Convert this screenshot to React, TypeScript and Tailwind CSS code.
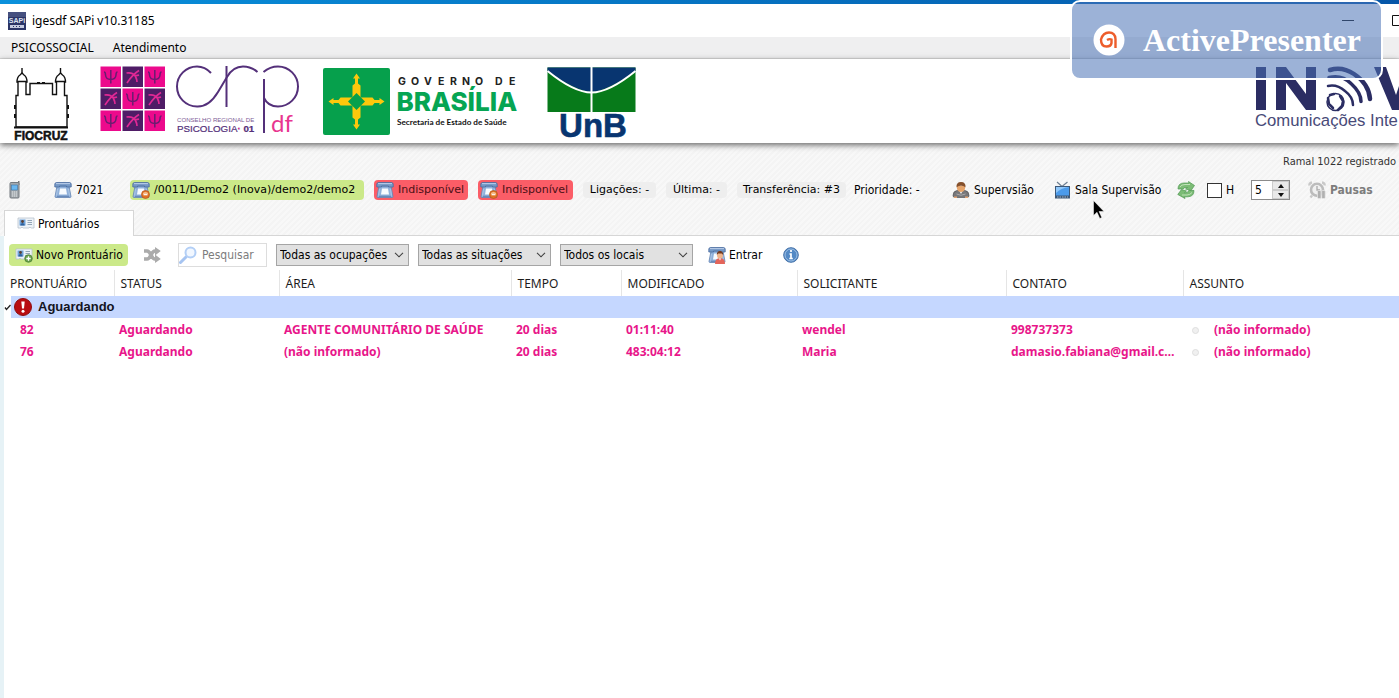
import React from "react";

const ui = "font-['Noto_Sans','Open_Sans',sans-serif]";
const tahoma = "font-['DejaVu_Sans_Condensed','DejaVu_Sans',sans-serif]";
const verdana = "font-['DejaVu_Sans',sans-serif]";

function AppIcon() {
  return (
    <svg width="18" height="18" viewBox="0 0 18 18" aria-hidden="true">
      <rect width="18" height="18" fill="#2c3566" />
      <rect y="0" width="18" height="5" fill="#46507f" />
      <text x="9" y="11" textAnchor="middle" fontSize="7" fontWeight="bold" fill="#dfe3f2" fontFamily="Liberation Sans">SAPi</text>
      <rect x="2" y="13" width="14" height="3" fill="#c6cbe0" />
      <path d="M5 14.5h1m2 0h1m2 0h1" stroke="#2c3566" />
    </svg>
  );
}

function Telephone({ badge }: { badge?: "busy" | "user" }) {
  return (
    <svg width="18" height="18" viewBox="0 0 18 18" className="shrink-0" aria-hidden="true">
      <path d="M3 5h12L17 15.500q0 1-1 1H2q-1 0-1-1z" fill="#8fb0da" stroke="#6384b2" strokeWidth=".8" />
      <path d="M.8 3Q.8 1.500 3 1.500h12q2.200 0 2.200 1.500v3h-4.700V5h-7v1H.8z" fill="#7598c6" stroke="#4a6c9f" strokeWidth=".8" />
      <path d="M2 2.600h14" stroke="#b9cde8" />
      <path d="M6 7.500h6l1 6H5z" fill="#f8fbff" />
      <path d="M3.500 8l-1 6.500M14.500 8l1 6.500" stroke="#b5cbe8" strokeWidth=".8" />
      <path d="M3 15.300h12" stroke="#5f83b5" />
      {badge === "busy" && (
        <>
          <circle cx="13.500" cy="13.500" r="4" fill="#e07424" stroke="#b9541b" strokeWidth=".7" />
          <path d="M11 12q2.500-2 5 0v1h-5z" fill="#f6bd8c" />
          <path d="M11.500 13.700h4" stroke="#fff" strokeWidth="1.200" />
        </>
      )}
      {badge === "user" && (
        <>
          <path d="M7 18q0-6 5-6t5 6z" fill="#e4655a" />
          <circle cx="12" cy="9.500" r="3" fill="#f0b58c" />
          <path d="M8.800 9q0-4 3.200-4t3.200 4l-1.500-1.500h-3.500z" fill="#74391d" />
          <path d="M11 12.500l1 2 1-2z" fill="#fff" />
        </>
      )}
    </svg>
  );
}

function Mobile() {
  return (
    <svg width="12" height="18" viewBox="0 0 12 18" aria-hidden="true">
      <path d="M9 0h1.500v4H9z" fill="#777" />
      <rect x="1" y="1.500" width="9" height="15.500" rx="1" fill="#a3a9ae" stroke="#73797f" />
      <rect x="2.500" y="4" width="6" height="5" fill="#69b6ef" stroke="#3f75a5" strokeWidth=".6" />
      <path d="M3 11h5M3 13h5M3 15h5" stroke="#e4e8ea" strokeDasharray="1.200 .7" />
    </svg>
  );
}

function Card({ add }: { add?: boolean }) {
  return (
    <svg width="18" height="16" viewBox="0 0 18 16" aria-hidden="true">
      <path d="M1 2h16v10h-3l-1-1-1 1H6l-1-1-1 1H1z" fill="#eef3f8" stroke="#b7c2cd" strokeWidth=".8" />
      <rect x="2.500" y="3.500" width="6" height="6" fill="#6ea3da" />
      <circle cx="5.500" cy="5.500" r="1.400" fill="#5b3e33" />
      <path d="M3.300 9.500q0-2.500 2.200-2.500t2.200 2.500z" fill="#2f609c" />
      <path d="M10.500 4.500H15M10.500 6.500H15M10.500 8.500H15" stroke="#94a6b8" />
      {add && (
        <>
          <circle cx="13.500" cy="11.500" r="3.800" fill="#69a24d" stroke="#477a31" strokeWidth=".7" />
          <path d="M13.500 9.300v4.400M11.300 11.500h4.400" stroke="#fff" strokeWidth="1.300" />
        </>
      )}
    </svg>
  );
}

function Person() {
  return (
    <svg width="18" height="18" viewBox="0 0 18 18" aria-hidden="true">
      <path d="M1 14.500q0-4.500 4-5h8q4 .5 4 5 0 2-2 2H3q-2 0-2-2z" fill="#77777a" stroke="#47474a" strokeWidth=".6" />
      <path d="M4.500 13q4.500 2.500 9 0" stroke="#a9a9ab" fill="none" />
      <path d="M7 9.500h4L9 13z" fill="#f5f5f5" />
      <path d="M5 5h8v3q-1 3-4 3T5 8z" fill="#e6a56c" />
      <path d="M4.500 6.500Q4 1 9 1t4.500 5.500Q12 4.500 9 4.800 6 4.500 4.500 6.500z" fill="#85502c" />
      <path d="M2 16.300h3m8 0h3" stroke="#e0a173" strokeWidth="1.500" />
    </svg>
  );
}

function Television() {
  return (
    <svg width="17" height="18" viewBox="0 0 17 18" aria-hidden="true">
      <path d="M3 1l5 4.500L13.500 1" fill="none" stroke="#6d7e91" strokeWidth="1.200" />
      <rect x="1" y="5" width="15" height="12.500" fill="#3d5877" />
      <path d="M2 6h13v8.500H2z" fill="#4c9bea" />
      <path d="M2 6h13q-8 1-13 6z" fill="#8fc7fa" />
      <path d="M3 16h11" stroke="#a8b6c5" strokeDasharray="1.500 1" />
    </svg>
  );
}

function Refresh() {
  return (
    <svg width="18" height="18" viewBox="0 0 18 18" aria-hidden="true">
      <path d="M1 8Q1 2 7 2h5l-.5-1.500L17.500 4.500 14 9.500 8.500 8l2-1.500H9q-2 0-3 1.500z" fill="#7cbc76" stroke="#4e9850" strokeWidth=".7" />
      <path d="M17 9.500q0 6-6 6.300H7.500L8 17.500.8 13.500 4.500 8.500l5 1.500-2 1.700H9q2.200 0 2.700-2.200z" fill="#7cbc76" stroke="#4e9850" strokeWidth=".7" />
      <path d="M3 6q1.500-2.500 5-2.500h5M15 11.500Q13 14 10 14H5" stroke="#bfe2b8" fill="none" />
    </svg>
  );
}

function AlarmPause() {
  return (
    <svg width="18" height="18" viewBox="0 0 18 18" aria-hidden="true">
      <path d="M1.500 4.500Q1 2 4 1.500M16.500 4.500Q17 2 14 1.500M4 14.500l-1.500 2" stroke="#c9c9c9" strokeWidth="2.400" fill="none" />
      <circle cx="9" cy="8.800" r="6" fill="#f0f0f0" stroke="#bcbcbc" strokeWidth="2.600" />
      <path d="M9 5v4h3" stroke="#aaa" strokeWidth="1.300" fill="none" />
      <rect x="9.500" y="9.500" width="3.500" height="8" rx="1" fill="#b0b0b0" stroke="#e9e9e9" strokeWidth=".7" />
      <rect x="13.700" y="9.500" width="3.500" height="8" rx="1" fill="#b0b0b0" stroke="#e9e9e9" strokeWidth=".7" />
    </svg>
  );
}

function ShuffleIcon() {
  return (
    <svg width="18" height="16" viewBox="0 0 18 16" aria-hidden="true">
      <path d="M1 4h3q2 0 4 4t4 4h2M1 12h3q2 0 4-4t4-4h2" fill="none" stroke="#ababab" strokeWidth="3.600" />
      <path d="M12 0l5.800 4L12 8.500zM12 7.500l5.800 4.500-5.800 4z" fill="#ababab" />
    </svg>
  );
}

function Magnifier() {
  return (
    <svg width="18" height="18" viewBox="0 0 18 18" aria-hidden="true">
      <path d="M1.500 16.500L7 11" stroke="#a6c4f1" strokeWidth="3" strokeLinecap="round" />
      <circle cx="11.500" cy="6.500" r="5" fill="#f1f7ff" stroke="#b3cff6" strokeWidth="2" />
    </svg>
  );
}

function InfoIcon() {
  return (
    <svg width="16" height="16" viewBox="0 0 16 16" aria-hidden="true">
      <circle cx="8" cy="8" r="7.300" fill="#5389c5" stroke="#4370a8" />
      <circle cx="8" cy="8" r="6" fill="none" stroke="#9dbfe3" />
      <path d="M8 3v2M6.500 7H8v4.500M6.300 11.500h3.500" fill="none" stroke="#fff" strokeWidth="1.700" />
    </svg>
  );
}

function AlertIcon() {
  return (
    <svg width="18" height="18" viewBox="0 0 18 18" aria-hidden="true">
      <circle cx="9" cy="9" r="8.500" fill="#b90d12" stroke="#8e0e10" />
      <path d="M7.300 3.500h3.400L10 10.500H8z" fill="#fff" />
      <circle cx="9" cy="13.300" r="1.500" fill="#fff" />
    </svg>
  );
}

function FiocruzLogo() {
  return (
    <svg width="60" height="84" viewBox="11 59 60 84" role="img" aria-label="Fiocruz">
      <g fill="none" stroke="#111" strokeWidth="1.400">
        <path d="M16 127V95.500h2V82h-1q0-5 3-7l2-2 2 2q3 2 3 7h-1v12.500h4V83.500h22.500v11h4V82h-1q0-5 3-7l2-2 2 2q3 2 3 7h-1v13.500H67V127z" />
        <path d="M22 68v6M60.500 68v6M17.500 81.500h9M56 81.500h9" />
        <path d="M14 127.500h54M37 83h3M42 83h3" strokeWidth="2" />
        <path d="M15 105v4M15 114v4M68 105v4M68 114v4" strokeWidth="2" />
      </g>
      <text x="41" y="140" textAnchor="middle" fontFamily="Liberation Sans" fontWeight="bold" fontSize="12" fill="#111" stroke="#111" strokeWidth=".5">FIOCRUZ</text>
    </svg>
  );
}

function CrpLogo() {
  const cells = [0, 1, 2, 3, 4, 5, 6, 7, 8];
  return (
    <svg width="202" height="84" viewBox="99 59 202 84" role="img" aria-label="Conselho Regional de Psicologia">
      {cells.map((i) => {
        const psi = i % 2 === 0;
        return (
          <g key={i} transform={`translate(${100.5 + (i % 3) * 22} ${66.5 + Math.floor(i / 3) * 22})`}>
            <rect width="20.500" height="20.500" fill={psi ? "#ec0a8c" : "#4f1c66"} />
            {psi ? (
              <path d="M3.500 5.500q1.500 0 1.500 3 .5 4.500 5.300 4.500t5.200-4.500q0-3 1.500-3M10.300 3.500v13.500" fill="none" stroke="#6a1d70" strokeWidth="1.500" />
            ) : (
              <path d="M4 6.500q6.500-1 9 3.500 1.500 3 1.500 5.500M16.500 4Q10 8 4.500 16.500M11 8.500q2.500 1 5.500 0" fill="none" stroke="#e02895" strokeWidth="1.700" />
            )}
          </g>
        );
      })}
      <g fill="none" stroke="#54307a" strokeWidth="2">
        <path d="M211 73Q205 66.500 197 66.500A20 20 0 0 0 197 106.500Q209 107 218 92L227 77Q233 66.500 243 66.500 251 66.500 257.500 72" />
        <path d="M226.500 66v41M264 79v54" />
        <path d="M263.500 72Q270 66.500 278 66.500A20 20 0 0 1 278 106.500Q268 106.500 264 98" />
      </g>
      <text x="177" y="122" fontFamily="Liberation Sans" fontSize="6.100" fill="#7c5a96">CONSELHO REGIONAL DE</text>
      <text x="177" y="132" fontFamily="Liberation Sans" fontSize="9.800" fill="#54307a" stroke="#54307a" strokeWidth=".2">PSICOLOGIA<tspan fill="#ec0a8c" fontWeight="bold">·</tspan><tspan fontWeight="bold"> 01</tspan></text>
      <text x="271" y="132" fontFamily="Lato" fontSize="24" fill="#e8368f">df</text>
    </svg>
  );
}

function BrasiliaLogo() {
  const arms = [0, 90, 180, 270];
  return (
    <svg width="200" height="84" viewBox="321 59 200 84" role="img" aria-label="Governo de Brasília">
      <rect x="323" y="68" width="67" height="67" rx="2" fill="#06a04c" />
      <g transform="translate(356.500 101.500)" fill="#fdc80c">
        {arms.map((a) => (
          <path key={a} transform={`rotate(${a})`} d="M-4 0V-16L-1.500-18V-23H-3.500L0-28 3.500-23H1.500V-18L4-16V0z" />
        ))}
        <path d="M0-8.500L8.500 0 0 8.500-8.500 0z" fill="#06a04c" />
      </g>
      <text y="85" fontFamily="Inter" fontWeight="bold" fontSize="10.500" fill="#222">
        <tspan x="398">G</tspan><tspan x="411">O</tspan><tspan x="424">V</tspan><tspan x="438">E</tspan><tspan x="450">R</tspan><tspan x="462">N</tspan><tspan x="475">O</tspan><tspan x="495">D</tspan><tspan x="509">E</tspan>
      </text>
      <text x="396.500" y="111" fontFamily="Inter" fontWeight="800" fontSize="26" fill="#06a553">BRASÍLIA</text>
      <text x="397" y="125" fontFamily="Liberation Sans Narrow, Lato" fontWeight="bold" fontSize="8.200" fill="#111">Secretaria de Estado de Saúde</text>
    </svg>
  );
}

function UnbLogo() {
  return (
    <svg width="92" height="84" viewBox="546 59 92 84" role="img" aria-label="UnB">
      <path d="M547.500 67.500h88V112h-88z" fill="#077a1a" />
      <path d="M547.500 67.500h88V72Q604 92 591.500 92T547.500 72z" fill="#083570" />
      <path d="M547.500 71Q574 92.500 591.500 92.500T635.500 71" fill="none" stroke="#fff" strokeWidth="2" />
      <path d="M591.500 67v46" stroke="#fff" strokeWidth="2" />
      <text x="593" y="136.500" textAnchor="middle" fontFamily="Liberation Sans" fontWeight="bold" fontSize="33" fill="#083570" stroke="#083570" strokeWidth=".6">UnB</text>
    </svg>
  );
}

function InovaLogo() {
  return (
    <svg width="146" height="84" viewBox="1253 59 146 84" role="img" aria-label="Inova Comunicações Inteligentes" className="shrink-0">
      <g fill="#2b2d63">
        <path d="M1256 67h10v43h-10zM1276 67h10l20 27V67h10v43h-10l-20-27v27h-10zM1374 67h12l10 28 4-12v27h-8z" />
      </g>
      <g fill="none" stroke="#2b2d63" strokeLinecap="round">
        <path d="M1330 70q12-4 24 4 15 10 16 25" strokeWidth="4.500" />
        <path d="M1329 77.500q13-3 22 6 10 9 10 18" strokeWidth="3.500" />
        <path d="M1328 86q9-2 17 5 8 6 8 14" strokeWidth="2.500" />
        <circle cx="1335.500" cy="102" r="8.500" strokeWidth="1.500" />
        <path d="M1330 95l4-1M1340 96l3 5-1 5-4 4M1328 98l1 6 4 4" strokeWidth="2.500" />
      </g>
      <text x="1255" y="126" fontFamily="Liberation Sans" fontSize="16.700" fill="#484a78">Comunicações Inte</text>
    </svg>
  );
}

function Recorder() {
  return (
    <div className="absolute top-0 right-4 flex h-20 w-[313px] items-center rounded-[10px] border-2 border-white bg-[#4b73b7]/55 pl-[21px]">
      <svg width="32" height="32" viewBox="0 0 32 32" aria-hidden="true">
        <circle cx="16" cy="16" r="15.500" fill="#fff" />
        <path d="M22.500 24V15Q22 8.500 16 8.500T8 15.500Q8 22.500 13.500 22.500 18 22.500 18.500 19V15.500Q16.500 14.500 14 16" fill="none" stroke="#ed5d2b" strokeWidth="2.400" />
      </svg>
      <span className="ml-[18px] font-['Liberation_Serif',serif] text-[32px] leading-8 font-bold text-white">ActivePresenter</span>
    </div>
  );
}

function Filter({ label }: { label: string }) {
  return (
    <label className="relative mr-[9px] block h-[22px] w-[133px]">
      <select aria-label={label} className="h-full w-full appearance-none rounded-none border border-[#a5a5a5] bg-[#e1e1e1] pl-[3px] text-[12px] text-black">
        <option>{label}</option>
      </select>
      <svg width="10" height="6" viewBox="0 0 10 6" className="pointer-events-none absolute top-2 right-[5px]" aria-hidden="true">
        <path d="M1 .8l4 4 4-4" fill="none" stroke="#444" strokeWidth="1.100" />
      </svg>
    </label>
  );
}

const columns = ["PRONTUÁRIO", "STATUS", "ÁREA", "TEMPO", "MODIFICADO", "SOLICITANTE", "CONTATO", "ASSUNTO"];
const rows = [
  ["82", "Aguardando", "AGENTE COMUNITÁRIO DE SAÚDE", "20 dias", "01:11:40", "wendel", "998737373"],
  ["76", "Aguardando", "(não informado)", "20 dias", "483:04:12", "Maria", "damasio.fabiana@gmail.com"],
];

function Records() {
  return (
    <table className={`w-full table-fixed border-collapse ${ui} text-[12px]`}>
      <colgroup>
        <col className="w-[110px]" />
        <col className="w-[165px]" />
        <col className="w-[232px]" />
        <col className="w-[110px]" />
        <col className="w-[176px]" />
        <col className="w-[209px]" />
        <col className="w-[177px]" />
        <col />
      </colgroup>
      <thead>
        <tr className="h-[26px]">
          {columns.map((c) => (
            <th key={c} className="border-r border-[#e5e5e5] p-0 pt-[2px] pl-[6px] text-left font-normal text-[#1c1c1c] last:border-r-0">{c}</th>
          ))}
        </tr>
      </thead>
      <tbody>
        <tr className="h-[22px]">
          <th colSpan={8} className="p-0 font-['Liberation_Sans',sans-serif] text-[13px] font-bold text-[#14141e]">
            <div className="flex h-[22px] items-center">
              <svg width="7" height="7" viewBox="0 0 7 7" aria-hidden="true">
                <path d="M1 3.500l1.500 2L6.500 1" fill="none" stroke="#222" strokeWidth="1.300" />
              </svg>
              <div className="flex h-full flex-1 items-center gap-[6px] bg-[#c5d7ff] pl-[3px]">
                <AlertIcon />
                Aguardando
              </div>
            </div>
          </th>
        </tr>
        {rows.map((r) => (
          <tr key={r[0]} className="h-[22px] font-bold text-[#e8168a]">
            {r.map((cell, i) => (
              <td key={i} className="truncate p-0 pt-[2px] pr-[7px] pl-[5px] first:pl-4">{cell}</td>
            ))}
            <td className="p-0 pt-[2px]">
              <div className="flex items-center gap-[15px] pl-[9px]">
                <span className="size-[7px] rounded-full border border-[#dedede] bg-[#f0f0f0]" />
                (não informado)
              </div>
            </td>
          </tr>
        ))}
      </tbody>
    </table>
  );
}

const iconButton = "flex items-center gap-1 whitespace-nowrap";
const status = "flex h-4 items-center justify-center rounded-sm bg-[#eeeeee] whitespace-nowrap";

export default function App() {
  return (
    <div className={`relative flex min-h-screen flex-col overflow-hidden bg-white text-black ${ui}`}>
      <div className="h-1 bg-linear-to-r from-[#0a91dc] to-[#0656a8]" />
      <header className="flex h-[33px] items-center gap-[6px] pl-2">
        <AppIcon />
        <h1 className="text-[12px]">igesdf SAPi v10.31185</h1>
        <div className="ml-auto flex items-center gap-[38px]">
          <button aria-label="Minimizar">
            <svg width="12" height="12" viewBox="0 0 12 12"><path d="M0 5.500h12" stroke="#111" /></svg>
          </button>
          <button aria-label="Maximizar" className="w-[7px] overflow-hidden">
            <svg width="11" height="11" viewBox="0 0 11 11" className="max-w-none"><path d="M.5.500h10v10H.500z" fill="none" stroke="#111" /></svg>
          </button>
        </div>
      </header>
      <nav className="flex h-[22px] items-center gap-[19px] border-b border-[#d9d9d9] bg-[#efeff0] pl-[11px] text-[12px]">
        <button>PSICOSSOCIAL</button>
        <button>Atendimento</button>
      </nav>
      <section className="relative flex h-[84px] items-center bg-white pl-[11px] shadow-[0_2px_6px_#666]">
        <FiocruzLogo />
        <div className="ml-7"><CrpLogo /></div>
        <div className="ml-5"><BrasiliaLogo /></div>
        <div className="ml-[25px]"><UnbLogo /></div>
        <div className="ml-auto"><InovaLogo /></div>
      </section>

      <main className={`flex flex-1 flex-col bg-[repeating-linear-gradient(135deg,#f4f4f4_0px,#f4f4f4_2px,#f8f8f8_2px,#f8f8f8_4px)] ${tahoma} text-[12px]`}>
        <div className="mt-[11px] ml-auto h-[18px] w-[116px] text-[11px] whitespace-nowrap text-[#333]">Ramal 1022 registrado</div>
        <div className="mt-2 flex h-5 items-center pl-[9px]">
          <button aria-label="Celular"><Mobile /></button>
          <button className={`${iconButton} ml-[33px] w-[76px]`}><Telephone />7021</button>
          <button className={`flex h-5 w-[234px] items-center gap-1 rounded-sm bg-[#cbe989] pl-[2px] whitespace-nowrap ${verdana} text-[11px]`}><Telephone badge="busy" />/0011/Demo2 (Inova)/demo2/demo2</button>
          <button className={`ml-[10px] flex h-5 w-[94px] items-center gap-1 rounded-sm bg-[#fb5d67] pl-[2px] text-[#4b1016] ${verdana} text-[11px]`}><Telephone />Indisponível</button>
          <button className={`ml-[10px] flex h-5 w-[95px] items-center gap-1 rounded-sm bg-[#fb5d67] pl-[2px] text-[#4b1016] ${verdana} text-[11px]`}><Telephone badge="busy" />Indisponível</button>
          <div className={`flex ${verdana} ml-[10px] gap-[10px] text-[11px]`}>
            <span className={`${status} w-[73px]`}>Ligações: -</span>
            <span className={`${status} w-[61px]`}>Última: -</span>
            <span className={`${status} w-[109px]`}>Transferência: #3</span>
          </div>
          <span className="ml-2 w-[98px] whitespace-nowrap">Prioridade: -</span>
          <button className={`${iconButton} w-[102px]`}><Person />Supervsião</button>
          <button className={`${iconButton} w-[123px]`}><Television />Sala Supervisão</button>
          <button aria-label="Atualizar"><Refresh /></button>
          <label className="ml-3 flex w-11 items-center gap-1 text-[12px]">
            <input type="checkbox" className="size-[15px] appearance-none border border-[#333] bg-white" />H
          </label>
          <div className="flex h-5 w-[39px] border border-[#8b8b8b] bg-white">
            <input aria-label="Intervalo" defaultValue="5" className="w-5 pl-[3px] outline-none" />
            <div className="flex flex-1 flex-col bg-[#e9e9e9]">
              <button aria-label="Aumentar" className="flex flex-1 items-center justify-center border border-[#ccc]">
                <svg width="6" height="4" viewBox="0 0 6 4"><path d="M0 4l3-4 3 4z" fill="#111" /></svg>
              </button>
              <button aria-label="Diminuir" className="flex flex-1 items-center justify-center border border-[#ccc]">
                <svg width="6" height="4" viewBox="0 0 6 4"><path d="M0 0l3 4 3-4z" fill="#111" /></svg>
              </button>
            </div>
          </div>
          <button className={`${iconButton} ml-[18px] font-bold text-[#7d7d7d]`}><AlarmPause />Pausas</button>
        </div>

        <div className="mt-[10px] flex h-[26px] pl-1">
          <button className="flex w-[130px] items-center gap-[3px] border border-b-0 border-[#d6d6d6] bg-white pl-3"><Card />Prontuários</button>
          <div className="flex-1 border-b border-[#d6d6d6]" />
        </div>
        <div className="flex flex-1 flex-col border-l-4 border-[#e6f2f6] bg-white">
          <div className="flex h-[34px] items-center pt-[3px] pl-[5px]">
            <button className="flex h-[22px] w-[119px] items-center gap-[3px] rounded-[4px] bg-[#cbe989] pl-[6px] whitespace-nowrap"><Card add />Novo Prontuário</button>
            <button aria-label="Alternar" className="ml-[15px]"><ShuffleIcon /></button>
            <label className="mr-[9px] ml-[17px] flex h-6 w-[89px] items-center gap-[5px] border border-[#ddd] bg-white">
              <Magnifier />
              <input aria-label="Pesquisar" placeholder="Pesquisar" className="w-[60px] outline-none placeholder:text-[#7c7c7c]" />
            </label>
            <Filter label="Todas as ocupações" />
            <Filter label="Todas as situações" />
            <Filter label="Todos os locais" />
            <button className="ml-[6px] flex w-[75px] items-center gap-[3px]"><Telephone badge="user" />Entrar</button>
            <button aria-label="Informações"><InfoIcon /></button>
          </div>
          <Records />
        </div>
      </main>

      <Recorder />
      <svg width="12" height="20" viewBox="0 0 12 20" className="pointer-events-none absolute top-[200px] left-[1093px]" aria-hidden="true">
        <path d="M.5.500v15l3.500-3.200 2.800 6.200 2-1-2.700-6H11z" fill="#000" stroke="#fff" strokeWidth=".5" />
      </svg>
    </div>
  );
}
